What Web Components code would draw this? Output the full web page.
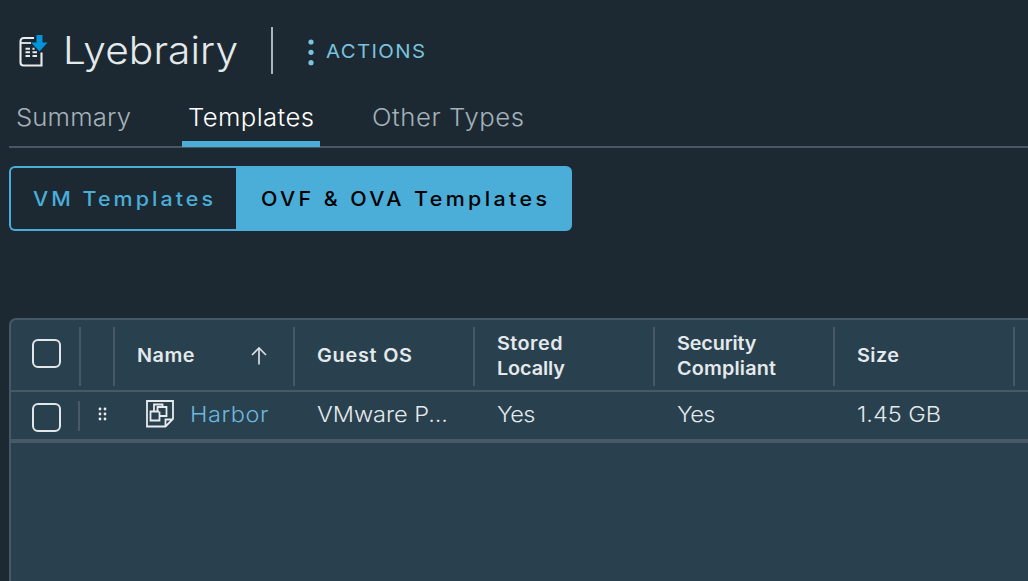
<!DOCTYPE html>
<html lang="en"><head><meta charset="utf-8"><title>Lyebrairy</title>
<style>html,body{margin:0;height:100%;overflow:hidden;background:#1c2932}body{font-family:Inter,"Open Sans",sans-serif;color:#e4e9ec}</style></head>
<body><library-page></library-page>
<script>
const define=(name,html,init)=>customElements.define(name,class extends HTMLElement{
  constructor(){super();this.attachShadow({mode:'open'}).innerHTML=html;}
  connectedCallback(){if(init)init(this);}
});
// Slightly extended label whose tracking is adjusted so that its text spans the width given in "w".
define('tracked-text',`<style>:host{display:block;white-space:nowrap}span{display:inline-block;transform-origin:0 50%}</style><span></span>`,el=>{
  const s=el.shadowRoot.querySelector('span');s.textContent=el.getAttribute('text');
  s.style.letterSpacing='0px';
  const k=1.07,n=s.textContent.length-1,w=+el.getAttribute('w')/k;
  const natural=s.getBoundingClientRect().width,gap=(w-natural)/n;
  s.style.letterSpacing=gap+'px';s.style.marginRight=(w*(k-1)-gap)+'px';
  s.style.transform=`scaleX(${k})`;
});
define('library-icon',`<style>:host{display:block;width:30px;height:34px}svg{display:block}</style>
<svg width="30" height="34" viewBox="0 0 30 34" fill="none"><path d="M16 4H6Q2.500 4 2.500 7.500V28.500Q2.500 31.500 5.500 31.500H23.500V18.500" stroke="#e8ecee" stroke-width="2.100"/><path d="M3 9H13" stroke="#e8ecee" stroke-width="1.800"/><path d="M7.500 14.700h4.500M7.500 18.300h4.500M7.500 22h4.500M14.500 14.700h2M14.500 18.300h4.500M14.500 22h4.500" stroke="#e8ecee" stroke-width="2"/><path d="M18.500 1h6v7.500h5L21.500 17.500l-8.500-9h5.500z" fill="#0095db"/></svg>`);
define('template-icon',`<style>:host{display:block;width:30px;height:30px}svg{display:block}</style>
<svg width="30" height="30" viewBox="0 0 30 30" fill="none" stroke="#e8ecee" stroke-width="1.800"><path d="M2 2H28V20L20.500 27.500H2ZM28 20.500H20.500V27.500"/><path d="M9 12V5.500H17.500V8M14 12.500H5.500V21.500H14.500V12.500M12.500 12V8H21.500V17H15"/></svg>`);
define('page-header',`<style>:host{display:flex;height:100px;box-sizing:border-box;padding:0 0 0 17px;align-items:flex-start}
library-icon{margin:34px 0 0 .5px}.t{font-size:38px;font-weight:300;line-height:50px;margin:25px 0 0 15px;width:208.500px;color:#e4e9ec}
.r{width:2px;height:47px;margin-top:27px;background:#aeb3b8}svg{margin:38px 0 0 34px;flex:none}.a{font-size:19px;font-weight:400;line-height:30px;margin:37px 0 0 11px;color:#79c3de}</style>
<library-icon></library-icon><tracked-text class="t" text="Lyebrairy" w="175"></tracked-text><div class="r"></div>
<svg width="8" height="28" fill="#79c3de"><circle cx="4" cy="4" r="2.600"/><circle cx="4" cy="14.300" r="2.600"/><circle cx="4" cy="24.700" r="2.600"/></svg><tracked-text class="a" text="ACTIONS" w="99"></tracked-text>`);
define('page-tab',`<style>:host{display:block;height:47px;box-sizing:border-box;font-size:24px;font-weight:300;line-height:36px;padding:0 7px;color:#a4b1b9}
:host([active]){color:#fff;border-bottom:6px solid #4aaed9;width:138px;padding-left:6px}:host(:last-child){padding-left:8px}</style><slot></slot>`);
define('page-tabs',`<style>:host{display:flex;height:48px;box-sizing:border-box;margin-left:9px;background:linear-gradient(#495865,#495865) bottom/100% 2px no-repeat;gap:44px}page-tab{flex:none}</style><slot></slot>`);
define('segment-button',`<style>:host{display:flex;align-items:center;box-sizing:border-box;height:65px;width:227px;flex:none;padding-left:22px;border:2px solid #4aaed9;border-right:0;border-radius:6px 0 0 6px;color:#4aaed9;font-size:20px;font-weight:450}
:host([active]){background:#4aaed9;color:#000;border-radius:0 6px 6px 0;width:335.500px;padding-left:23px}</style><slot></slot>`);
define('check-box',`<style>:host{display:block;box-sizing:border-box;width:29px;height:29px;border:2px solid #e1e6e9;border-radius:6px}</style>`);
define('grid-table',`<style>:host{display:block;margin:87px 0 0 9px;height:280px;box-sizing:border-box;border:2px solid #495865;border-width:2px 0 0 2px;border-radius:7px 0 0 0;background:#29404e}
.h,.r{display:grid;grid-template-columns:70px 34px 180px 180px 180px 180px 180px 1fr}
.h{height:72px;box-sizing:border-box;border-bottom:2px solid #495865;font-size:18.500px;font-weight:600;line-height:25px}
.h>div{display:flex;box-sizing:border-box;height:59px;margin-top:7px;padding:0 0 2px 22px;border-right:2px solid #495865;flex-direction:column;justify-content:center}
.h>.c{padding:0 0 7px 21px}.h>.n{flex-direction:row;align-items:center;justify-content:flex-start}.n svg{margin-left:56px}
.r{height:51px;box-sizing:border-box;border-bottom:4px solid #495865;font-size:22px;font-weight:300;line-height:45px}.r>div{padding-left:22px}.r .c{padding:11px 0 0 21px;display:flex}.r .c i{width:1.500px;height:30px;margin:-2px 0 0 17px;background:#495865}
.r .d{padding:15px 0 0 16px;line-height:0}.r .n{display:flex;padding-left:30px}template-icon{margin:7px 15px 0 0}.l{color:#6cb8dc}</style>
<div class="h"><div class="c"><check-box></check-box></div><div></div>
<div class="n"><tracked-text text="Name" w="57.500"></tracked-text><svg width="18" height="20" fill="none" stroke="#d8dee2" stroke-width="1.700"><path d="M9 18.500V2.500M2 9L9 2L16 9"/></svg></div>
<div><tracked-text text="Guest OS" w="95"></tracked-text></div><div><tracked-text text="Stored" w="65.500"></tracked-text><tracked-text text="Locally" w="68"></tracked-text></div>
<div><tracked-text text="Security" w="79.500"></tracked-text><tracked-text text="Compliant" w="99"></tracked-text></div><div><tracked-text text="Size" w="42"></tracked-text></div></div>
<div class="r"><div class="c"><check-box></check-box><i></i></div><div class="d"><svg width="12" height="14" fill="#e8ecee"><circle cx="3" cy="2" r="1.400"/><circle cx="8" cy="2" r="1.400"/><circle cx="3" cy="7" r="1.400"/><circle cx="8" cy="7" r="1.400"/><circle cx="3" cy="12" r="1.400"/><circle cx="8" cy="12" r="1.400"/></svg></div>
<div class="n"><template-icon></template-icon><tracked-text class="l" text="Harbor" w="78.500"></tracked-text></div><div><tracked-text text="VMware P..." w="131"></tracked-text></div><div><tracked-text text="Yes" w="38.500"></tracked-text></div><div><tracked-text text="Yes" w="38.500"></tracked-text></div><div><tracked-text text="1.45 GB" w="84"></tracked-text></div></div>`);
define('library-page',`<style>:host{display:block;height:581px;overflow:hidden}.s{display:flex;margin:18px 0 0 9px}</style>
<page-header></page-header><page-tabs><page-tab><tracked-text text="Summary" w="115"></tracked-text></page-tab><page-tab active><tracked-text text="Templates" w="126"></tracked-text></page-tab><page-tab><tracked-text text="Other Types" w="152"></tracked-text></page-tab></page-tabs>
<div class="s"><segment-button><tracked-text text="VM Templates" w="180"></tracked-text></segment-button><segment-button active><tracked-text text="OVF &amp; OVA Templates" w="286"></tracked-text></segment-button></div><grid-table></grid-table>`);
</script></body></html>
